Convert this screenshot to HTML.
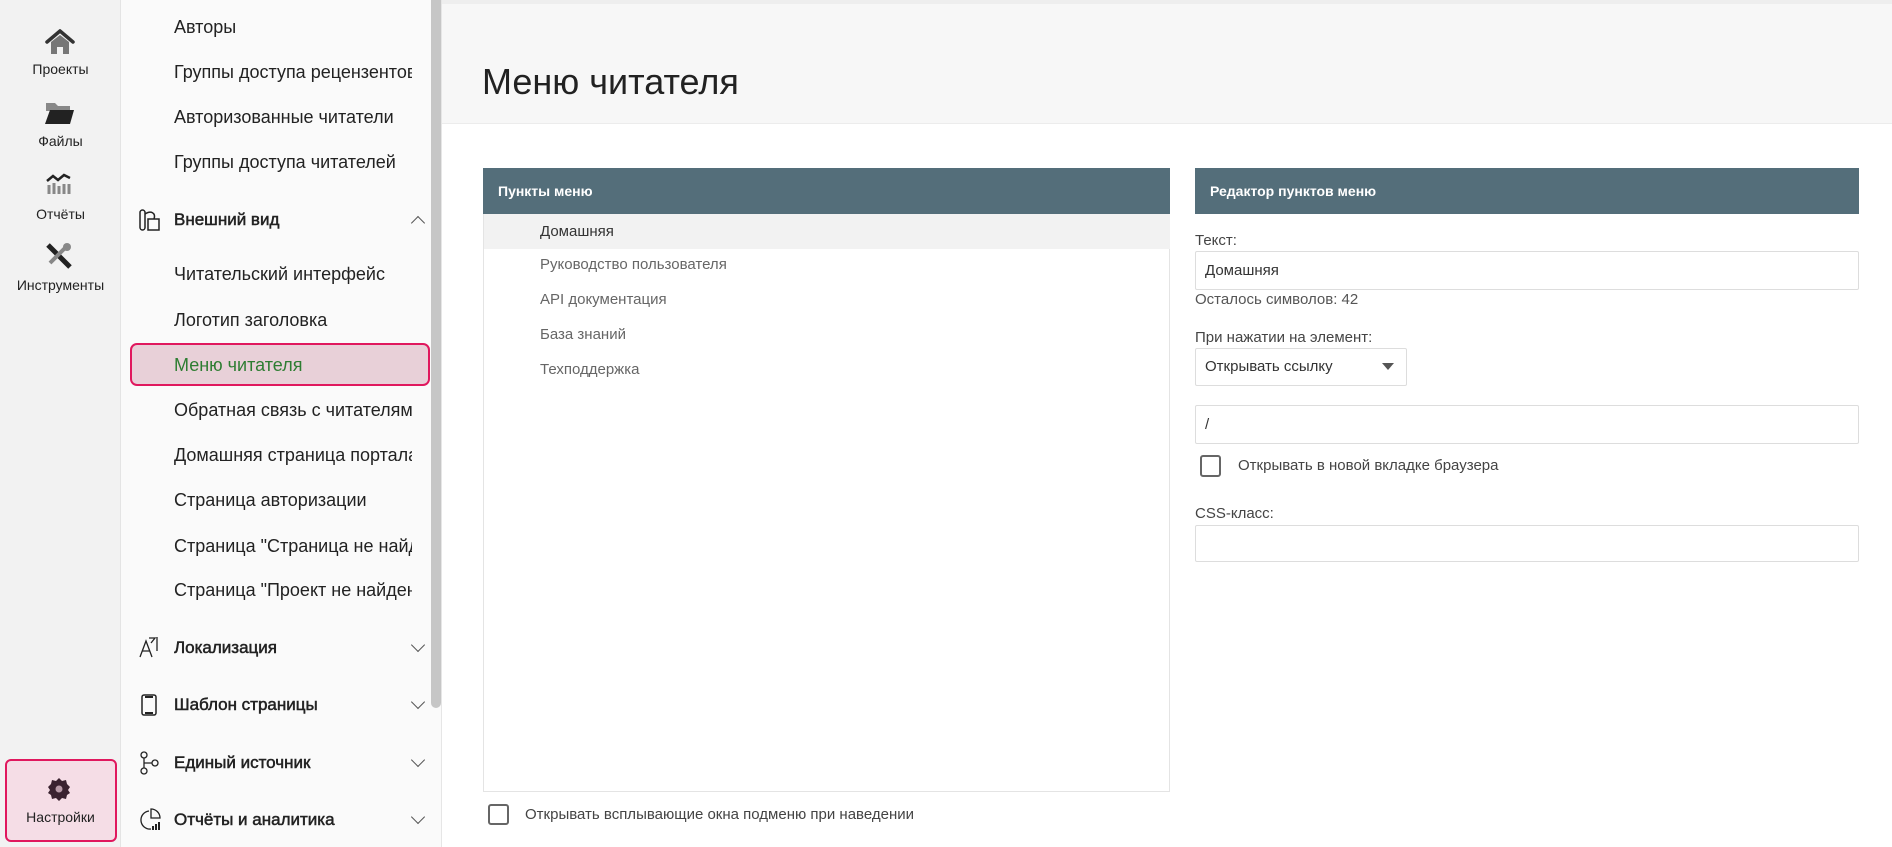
<!DOCTYPE html>
<html><head><meta charset="utf-8"><style>
*{box-sizing:border-box;margin:0;padding:0}
body{width:1892px;height:847px;overflow:hidden;background:#fff;font-family:"Liberation Sans",sans-serif;position:relative;color:#222}
.abs{position:absolute}
#rail{left:0;top:0;width:121px;height:847px;background:#f2f2f2;border-right:1px solid #e4e4e4}
.ri{position:absolute;left:0;width:121px;text-align:center;font-size:14px;color:#222}
#side{left:121px;top:0;width:321px;height:847px;background:#fafafa;border-right:1px solid #e6e6e6;overflow:hidden}
.si{position:absolute;left:53px;font-size:18px;color:#222;white-space:nowrap;width:238px;overflow:hidden;line-height:20px}
.sh{font-size:17px;-webkit-text-stroke:0.5px #222}
.chev{position:absolute;left:292px;width:10px;height:10px;border-right:1.5px solid #555;border-bottom:1.5px solid #555}
.lbl{position:absolute;font-size:15px;color:#444}
.inp{position:absolute;border:1px solid #ddd;background:#fff;border-radius:2px}
.row{position:absolute;left:484px;width:686px;height:35px;font-size:15px;color:#666;padding-left:56px;line-height:35px}
</style></head><body>
<div id="rail" class="abs">
 <svg class="abs" style="left:45px;top:29px" width="30" height="26" viewBox="0 0 30 26"><path d="M15 2 L2 13 M15 2 L28 13" stroke="#333" stroke-width="3.5" fill="none" stroke-linecap="round"/><path d="M6 13 L15 6 L24 13 V25 H18 V18 H12 V25 H6Z" fill="#777"/></svg>
 <div class="ri" style="top:61px">Проекты</div>
 <svg class="abs" style="left:45px;top:101px" width="30" height="24" viewBox="0 0 30 24"><path d="M1 2h9l3 3h12v5H1z" fill="#888"/><path d="M5 9h24l-4 14H0z" fill="#222"/></svg>
 <div class="ri" style="top:133px">Файлы</div>
 <svg class="abs" style="left:46px;top:172px" width="26" height="24" viewBox="0 0 26 24"><path d="M1 9 L7 4 L12 8 L18 3 L24 6" stroke="#222" stroke-width="2.5" fill="none"/><path d="M3 13v9M8 11v11M13 14v8M18 12v10M23 12v10" stroke="#888" stroke-width="3"/></svg>
 <div class="ri" style="top:206px">Отчёты</div>
 <svg class="abs" style="left:45px;top:242px" width="28" height="28" viewBox="0 0 28 28"><path d="M3 3 L25 25" stroke="#222" stroke-width="5"/><path d="M22 4 L5 21" stroke="#888" stroke-width="4"/><circle cx="22" cy="5" r="4" fill="#888"/></svg>
 <div class="ri" style="top:277px">Инструменты</div>
 <div class="abs" style="left:5px;top:759px;width:112px;height:83px;background:#f5dde6;border:2px solid #e0185e;border-radius:6px"></div>
 <svg class="abs" style="left:47px;top:777px" width="24" height="24" viewBox="0 0 24 24"><path d="M12 1l3 3 4-1 1 4 3 3-2 3 2 3-3 2-1 4-4-1-3 3-3-3-4 1-1-4-3-2 2-3-2-3 3-3 1-4 4 1z" fill="#3a2230"/><circle cx="12" cy="12" r="3.5" fill="#b89aa8"/></svg>
 <div class="ri" style="top:809px">Настройки</div>
</div>
<div id="side" class="abs">
 <div class="si" style="top:17px">Авторы</div>
 <div class="si" style="top:62px">Группы доступа рецензентов</div>
 <div class="si" style="top:107px">Авторизованные читатели</div>
 <div class="si" style="top:152px">Группы доступа читателей</div>
 <svg class="abs" style="left:18px;top:209px" width="22" height="22" viewBox="0 0 22 22"><rect x="1" y="1" width="5" height="20" rx="2.5" fill="none" stroke="#222" stroke-width="1.5"/><rect x="9" y="10" width="11" height="11" fill="none" stroke="#222" stroke-width="1.5"/><path d="M6 5 C12 1 17 4 15 10" fill="none" stroke="#222" stroke-width="1.5"/></svg>
 <div class="si sh" style="top:210px">Внешний вид</div>
 <div class="chev" style="top:218px;transform:rotate(-135deg)"></div>
 <div class="si" style="top:264px">Читательский интерфейс</div>
 <div class="si" style="top:310px">Логотип заголовка</div>
 <div class="abs" style="left:9px;top:343px;width:300px;height:43px;background:#e8d0d8;border:2px solid #e0185e;border-radius:7px"></div>
 <div class="si" style="top:355px;color:#2e7d32">Меню читателя</div>
 <div class="si" style="top:400px">Обратная связь с читателями</div>
 <div class="si" style="top:445px">Домашняя страница портала</div>
 <div class="si" style="top:490px">Страница авторизации</div>
 <div class="si" style="top:536px">Страница "Страница не найдена"</div>
 <div class="si" style="top:580px">Страница "Проект не найден"</div>
 <svg class="abs" style="left:18px;top:636px" width="22" height="22" viewBox="0 0 22 22"><path d="M1 21 L7 5 L13 21 M3 15h8" fill="none" stroke="#222" stroke-width="1.3"/><path d="M10 2h6l-4 5M18 1v14" fill="none" stroke="#222" stroke-width="1.3"/></svg>
 <div class="si sh" style="top:638px">Локализация</div>
 <div class="chev" style="top:640px;transform:rotate(45deg)"></div>
 <svg class="abs" style="left:20px;top:694px" width="16" height="22" viewBox="0 0 16 22"><rect x="1" y="1" width="14" height="20" rx="2" fill="none" stroke="#222" stroke-width="1.5"/><path d="M4 3h8M4 19h8" stroke="#222" stroke-width="2"/></svg>
 <div class="si sh" style="top:695px">Шаблон страницы</div>
 <div class="chev" style="top:697px;transform:rotate(45deg)"></div>
 <svg class="abs" style="left:18px;top:751px" width="22" height="24" viewBox="0 0 22 24"><circle cx="5" cy="4" r="3" fill="none" stroke="#222" stroke-width="1.3"/><circle cx="5" cy="20" r="3" fill="none" stroke="#222" stroke-width="1.3"/><circle cx="16" cy="12" r="3" fill="none" stroke="#222" stroke-width="1.3"/><path d="M5 7v10M5 12h8" stroke="#222" stroke-width="1.3" fill="none"/></svg>
 <div class="si sh" style="top:753px">Единый источник</div>
 <div class="chev" style="top:755px;transform:rotate(45deg)"></div>
 <svg class="abs" style="left:18px;top:808px" width="22" height="24" viewBox="0 0 22 24"><path d="M10 3 A9 9 0 1 0 12 21" fill="none" stroke="#222" stroke-width="1.3"/><path d="M12 1v9h9A9 9 0 0 0 12 1z" fill="none" stroke="#222" stroke-width="1.3"/><path d="M14 22v-4M17 22v-6M20 22v-8" stroke="#222" stroke-width="2"/></svg>
 <div class="si sh" style="top:810px">Отчёты и аналитика</div>
 <div class="chev" style="top:812px;transform:rotate(45deg)"></div>
 <div class="abs" style="left:310px;top:0;width:10px;height:708px;background:#c6c6c6;border-radius:0 0 5px 5px"></div>
</div>
<div class="abs" style="left:442px;top:0;width:1450px;height:124px;background:#f7f7f7;border-bottom:1px solid #ececec;border-top:4px solid #eee"></div>
<div class="abs" style="left:482px;top:61px;font-size:36px;color:#222">Меню читателя</div>

<div class="abs" style="left:483px;top:168px;width:687px;height:624px;border:1px solid #e4e4e4"></div>
<div class="abs" style="left:483px;top:168px;width:687px;height:46px;background:#546e7a;color:#fff;font-weight:bold;font-size:14px;line-height:46px;padding-left:15px">Пункты меню</div>
<div class="row" style="top:214px;background:#f2f2f2;color:#333">Домашняя</div>
<div class="row" style="top:247px">Руководство пользователя</div>
<div class="row" style="top:282px">API документация</div>
<div class="row" style="top:317px">База знаний</div>
<div class="row" style="top:352px">Техподдержка</div>
<div class="abs" style="left:488px;top:804px;width:21px;height:21px;border:2px solid #666;border-radius:3px"></div>
<div class="lbl" style="left:525px;top:806px">Открывать всплывающие окна подменю при наведении</div>

<div class="abs" style="left:1195px;top:168px;width:664px;height:46px;background:#546e7a;color:#fff;font-weight:bold;font-size:14px;line-height:46px;padding-left:15px">Редактор пунктов меню</div>
<div class="lbl" style="left:1195px;top:232px">Текст:</div>
<div class="inp" style="left:1195px;top:251px;width:664px;height:39px"></div>
<div class="lbl" style="left:1205px;top:262px;color:#333">Домашняя</div>
<div class="lbl" style="left:1195px;top:291px;color:#555">Осталось символов: 42</div>
<div class="lbl" style="left:1195px;top:329px">При нажатии на элемент:</div>
<div class="inp" style="left:1195px;top:348px;width:212px;height:38px"></div>
<div class="lbl" style="left:1205px;top:358px;color:#333">Открывать ссылку</div>
<div class="abs" style="left:1382px;top:363px;width:0;height:0;border-left:6px solid transparent;border-right:6px solid transparent;border-top:7px solid #555"></div>
<div class="inp" style="left:1195px;top:405px;width:664px;height:39px"></div>
<div class="lbl" style="left:1205px;top:416px;color:#333">/</div>
<div class="abs" style="left:1200px;top:455px;width:21px;height:22px;border:2px solid #666;border-radius:3px"></div>
<div class="lbl" style="left:1238px;top:457px">Открывать в новой вкладке браузера</div>
<div class="lbl" style="left:1195px;top:505px">CSS-класс:</div>
<div class="inp" style="left:1195px;top:525px;width:664px;height:37px"></div>
</body></html>
